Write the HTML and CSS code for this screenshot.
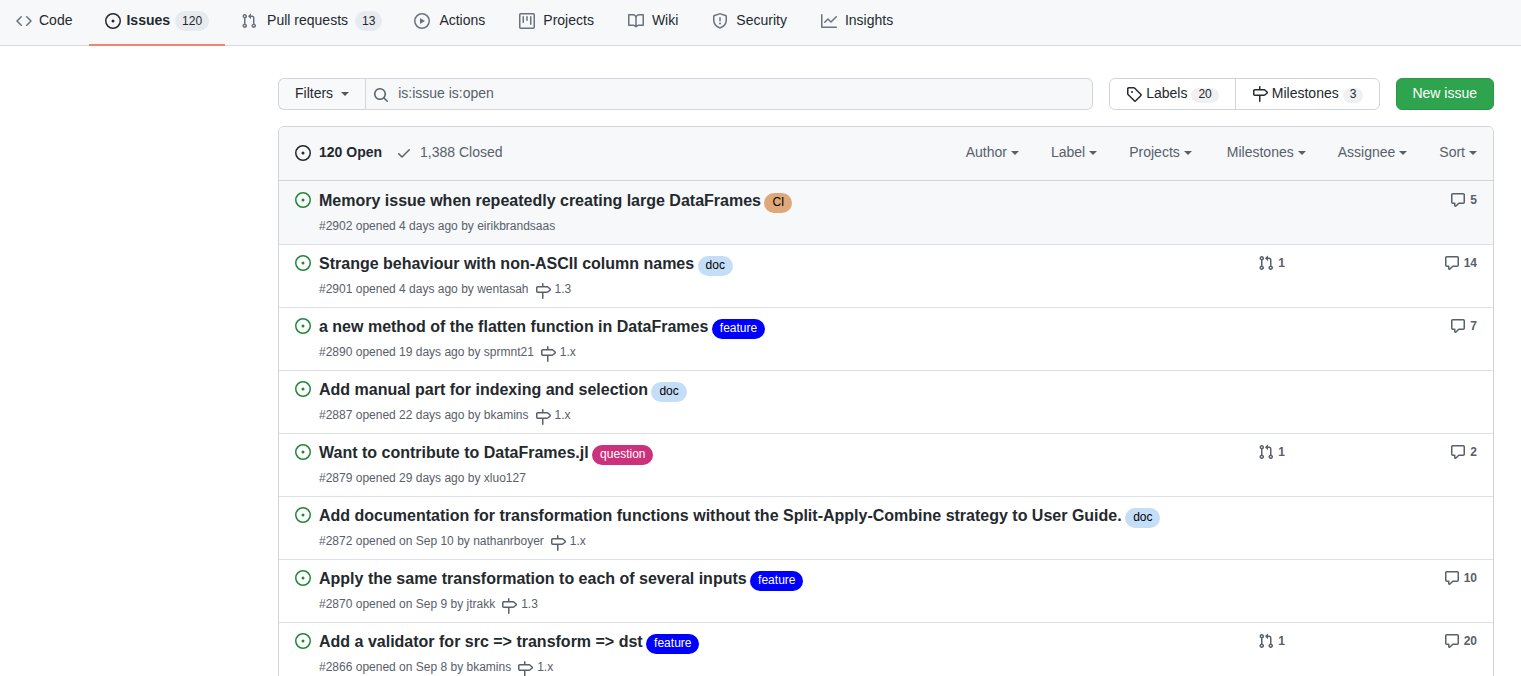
FILE: index.html
```html
<!DOCTYPE html>
<html lang="en">
<head>
<meta charset="utf-8">
<title>Issues</title>
<link rel="stylesheet" href="styles.css">
</head>
<body>
<svg class="sprite" aria-hidden="true">
  <symbol id="code" viewBox="0 0 16 16"><path d="M4.72 3.22a.75.75 0 011.06 1.06L2.06 8l3.72 3.72a.75.75 0 11-1.06 1.06L.47 8.53a.75.75 0 010-1.06l4.25-4.25zm6.56 0a.75.75 0 10-1.06 1.06L13.94 8l-3.72 3.72a.75.75 0 101.06 1.06l4.25-4.25a.75.75 0 000-1.06l-4.25-4.25z"/></symbol>
  <symbol id="issue" viewBox="0 0 16 16"><path d="M8 9.5a1.5 1.5 0 100-3 1.5 1.5 0 000 3z"/><path fill-rule="evenodd" d="M8 0a8 8 0 100 16A8 8 0 008 0zM1.5 8a6.500 6.500 0 1113 0 6.500 6.500 0 01-13 0z"/></symbol>
  <symbol id="pull" viewBox="0 0 16 16"><path fill-rule="evenodd" d="M7.177 3.073L9.573.677A.25.25 0 0110 .854v4.792a.25.25 0 01-.427.177L7.177 3.427a.25.25 0 010-.354zM3.750 2.500a.75.75 0 100 1.500.75.75 0 000-1.500zm-2.250.75a2.250 2.250 0 113 2.122v5.256a2.251 2.251 0 11-1.500 0V5.372A2.250 2.250 0 011.500 3.250zM11 2.500h-1V4h1a1 1 0 011 1v5.628a2.251 2.251 0 101.500 0V5A2.500 2.500 0 0011 2.500zm1 10.250a.75.75 0 111.500 0 .75.75 0 01-1.500 0zM3.750 12a.75.75 0 100 1.500.75.75 0 000-1.500z"/></symbol>
  <symbol id="play" viewBox="0 0 16 16"><path fill-rule="evenodd" d="M1.5 8a6.5 6.5 0 1113 0 6.5 6.5 0 01-13 0zM8 0a8 8 0 100 16A8 8 0 008 0zM6.379 5.227A.25.25 0 006 5.442v5.117a.25.25 0 00.379.214l4.264-2.559a.25.25 0 000-.428L6.379 5.227z"/></symbol>
  <symbol id="project" viewBox="0 0 16 16"><path fill-rule="evenodd" d="M1.750 0A1.750 1.750 0 000 1.750v12.500C0 15.216.784 16 1.750 16h12.500A1.750 1.750 0 0016 14.250V1.750A1.750 1.750 0 0014.250 0H1.750zM1.500 1.750a.25.25 0 01.25-.25h12.500a.25.25 0 01.25.25v12.500a.25.25 0 01-.25.25H1.750a.25.25 0 01-.25-.25V1.750zM11.750 3a.75.75 0 00-.75.75v7.500a.75.75 0 001.500 0v-7.500a.75.75 0 00-.75-.75zm-8.250.75a.75.75 0 011.500 0v5.500a.75.75 0 01-1.500 0v-5.500zM8 3a.75.75 0 00-.75.75v3.500a.75.75 0 001.500 0v-3.500A.75.75 0 008 3z"/></symbol>
  <symbol id="book" viewBox="0 0 16 16"><path fill-rule="evenodd" d="M0 1.750A.75.75 0 01.75 1h4.253c1.227 0 2.317.59 3 1.501A3.744 3.744 0 0111.006 1h4.245a.75.75 0 01.75.75v10.500a.75.75 0 01-.75.75h-4.507a2.250 2.250 0 00-1.591.659l-.622.621a.75.75 0 01-1.060 0l-.622-.621A2.250 2.250 0 005.258 13H.75a.75.75 0 01-.75-.75V1.750zm8.755 3a2.250 2.250 0 012.250-2.250H14.500v9h-3.757c-.71 0-1.400.201-1.992.572l.004-7.322zm-1.504 7.324l.004-5.073-.002-2.253A2.250 2.250 0 005.003 2.500H1.500v9h3.757a3.750 3.750 0 011.994.574z"/></symbol>
  <symbol id="shield" viewBox="0 0 16 16"><path fill-rule="evenodd" d="M7.467.133a1.750 1.750 0 011.066 0l5.250 1.680A1.750 1.750 0 0115 3.480V7c0 1.566-.32 3.182-1.303 4.682-.983 1.498-2.585 2.813-5.032 3.855a1.700 1.700 0 01-1.330 0c-2.447-1.042-4.049-2.357-5.032-3.855C1.320 10.182 1 8.566 1 7V3.480a1.750 1.750 0 011.217-1.667l5.250-1.680zm.61 1.429a.25.25 0 00-.153 0l-5.250 1.680a.25.25 0 00-.174.238V7c0 1.358.275 2.666 1.057 3.860.784 1.194 2.121 2.340 4.366 3.297a.2.2 0 00.154 0c2.245-.956 3.582-2.104 4.366-3.298C13.225 9.666 13.500 8.360 13.500 7V3.480a.25.25 0 00-.174-.237l-5.250-1.680zM8.750 4.750a.75.75 0 00-1.500 0v3a.75.75 0 001.500 0v-3zM9 10.500a1 1 0 11-2 0 1 1 0 012 0z"/></symbol>
  <symbol id="graph" viewBox="0 0 16 16"><path fill-rule="evenodd" d="M1.500 1.750a.75.75 0 00-1.500 0v12.500c0 .414.336.75.75.75h14.500a.75.75 0 000-1.500H1.500V1.750zm14.280 2.530a.75.75 0 00-1.060-1.060L10 7.940 7.530 5.470a.75.75 0 00-1.060 0L3.220 8.720a.75.75 0 001.060 1.060L7 7.060l2.470 2.470a.75.75 0 001.060 0l5.250-5.250z"/></symbol>
  <symbol id="search" viewBox="0 0 16 16"><path fill-rule="evenodd" d="M11.500 7a4.499 4.499 0 11-8.998 0A4.499 4.499 0 0111.500 7zm-.82 4.740a6 6 0 111.060-1.060l3.040 3.040a.75.75 0 11-1.060 1.060l-3.040-3.040z"/></symbol>
  <symbol id="tag" viewBox="0 0 16 16"><path fill-rule="evenodd" d="M2.500 7.775V2.750a.25.25 0 01.25-.25h5.025a.25.25 0 01.177.073l6.250 6.250a.25.25 0 010 .354l-5.025 5.025a.25.25 0 01-.354 0l-6.250-6.250a.25.25 0 01-.073-.177zm-1.500 0V2.750C1 1.784 1.784 1 2.750 1h5.025c.464 0 .91.184 1.238.513l6.250 6.250a1.750 1.750 0 010 2.474l-5.026 5.026a1.750 1.750 0 01-2.474 0l-6.250-6.250A1.750 1.750 0 011 7.775zM6 5a1 1 0 100 2 1 1 0 000-2z"/></symbol>
  <symbol id="milestone" viewBox="0 0 16 16"><path fill-rule="evenodd" d="M7.750 0a.75.75 0 01.75.75V3h3.634c.414 0 .814.147 1.130.414l2.070 1.750a1.750 1.750 0 010 2.672l-2.070 1.750a1.750 1.750 0 01-1.130.414H8.500v5.250a.75.75 0 11-1.500 0V10H2.750A1.750 1.750 0 011 8.250v-3.500C1 3.784 1.784 3 2.750 3H7V.75A.75.75 0 017.750 0zm0 8.500h4.384a.25.25 0 00.161-.06l2.070-1.750a.25.25 0 000-.38l-2.070-1.750a.25.25 0 00-.161-.06H2.750a.25.25 0 00-.25.25v3.500c0 .138.112.25.25.25h5z"/></symbol>
  <symbol id="check" viewBox="0 0 16 16"><path fill-rule="evenodd" d="M13.780 4.220a.75.75 0 010 1.060l-7.250 7.250a.75.75 0 01-1.060 0L2.220 9.280a.75.75 0 011.060-1.060L6 10.940l6.720-6.720a.75.75 0 011.060 0z"/></symbol>
  <symbol id="comment" viewBox="0 0 16 16"><path fill-rule="evenodd" d="M2.750 2.500a.25.25 0 00-.25.25v7.500c0 .138.112.25.25.25h2a.75.75 0 01.75.75v2.190l2.720-2.720a.75.75 0 01.53-.22h4.500a.25.25 0 00.25-.25v-7.500a.25.25 0 00-.25-.25H2.750zM1 2.750C1 1.784 1.784 1 2.750 1h10.500c.966 0 1.750.784 1.750 1.750v7.500A1.750 1.750 0 0113.250 12H9.060l-2.573 2.573A1.457 1.457 0 014 13.543V12H2.750A1.750 1.750 0 011 10.250v-7.500z"/></symbol>
</svg>

<nav class="tabs" aria-label="Repository">
  <a class="tab code" href="#code"><svg class="icon"><use href="#code"/></svg>Code</a>
  <a class="tab selected" href="#issues" aria-current="page"><svg class="icon"><use href="#issue"/></svg>Issues<span class="counter">120</span></a>
  <a class="tab pulls" href="#pulls"><svg class="icon"><use href="#pull"/></svg>Pull requests<span class="counter">13</span></a>
  <a class="tab actions" href="#actions"><svg class="icon"><use href="#play"/></svg>Actions</a>
  <a class="tab" href="#projects"><svg class="icon"><use href="#project"/></svg>Projects</a>
  <a class="tab" href="#wiki"><svg class="icon"><use href="#book"/></svg>Wiki</a>
  <a class="tab" href="#security"><svg class="icon"><use href="#shield"/></svg>Security</a>
  <a class="tab" href="#insights"><svg class="icon"><use href="#graph"/></svg>Insights</a>
</nav>

<main class="content">
  <div class="toolbar">
    <form class="search" role="search">
      <button class="filters" type="button">Filters<span class="caret"></span></button>
      <label class="field">
        <svg class="icon" role="img" aria-label="Search all issues"><use href="#search"/></svg>
        <input type="text" value="is:issue is:open">
      </label>
    </form>
    <div class="subnav">
      <a href="#labels"><svg class="icon"><use href="#tag"/></svg>Labels<span class="count">20</span></a>
      <a href="#milestones"><svg class="icon"><use href="#milestone"/></svg>Milestones<span class="count">3</span></a>
    </div>
    <button class="primary" type="button">New issue</button>
  </div>

  <section class="box">
    <header class="box-header">
      <div class="states">
        <a class="open" href="#open"><svg class="icon"><use href="#issue"/></svg>120 Open</a>
        <a href="#closed"><svg class="icon"><use href="#check"/></svg>1,388 Closed</a>
      </div>
      <div class="menus">
        <button type="button">Author<span class="caret"></span></button>
        <button type="button">Label<span class="caret"></span></button>
        <button type="button">Projects<span class="caret"></span></button>
        <button type="button" class="apart">Milestones<span class="caret"></span></button>
        <button type="button">Assignee<span class="caret"></span></button>
        <button type="button">Sort<span class="caret"></span></button>
      </div>
    </header>
    <ul class="issues">
      <li class="issue focused">
        <svg class="icon status"><use href="#issue"/></svg>
        <div class="summary"><h3><a href="#2902">Memory issue when repeatedly creating large DataFrames</a> <a class="label ci" href="#ci">CI</a></h3>
          <p>#2902 opened 4 days ago by <a href="#u">eirikbrandsaas</a></p></div>
        <div class="stat"></div>
        <div class="stat"></div>
        <div class="stat"><a href="#2902"><svg class="icon"><use href="#comment"/></svg>5</a></div>
      </li>
      <li class="issue">
        <svg class="icon status"><use href="#issue"/></svg>
        <div class="summary"><h3><a href="#2901">Strange behaviour with non-ASCII column names</a> <a class="label doc" href="#doc">doc</a></h3>
          <p>#2901 opened 4 days ago by <a href="#u">wentasah</a><a class="milestone" href="#m"><svg class="icon"><use href="#milestone"/></svg>1.3</a></p></div>
        <div class="stat"><a href="#2901"><svg class="icon"><use href="#pull"/></svg>1</a></div>
        <div class="stat"></div>
        <div class="stat"><a href="#2901"><svg class="icon"><use href="#comment"/></svg>14</a></div>
      </li>
      <li class="issue">
        <svg class="icon status"><use href="#issue"/></svg>
        <div class="summary"><h3><a href="#2890">a new method of the flatten function in DataFrames</a> <a class="label feature" href="#feature">feature</a></h3>
          <p>#2890 opened 19 days ago by <a href="#u">sprmnt21</a><a class="milestone" href="#m"><svg class="icon"><use href="#milestone"/></svg>1.x</a></p></div>
        <div class="stat"></div>
        <div class="stat"></div>
        <div class="stat"><a href="#2890"><svg class="icon"><use href="#comment"/></svg>7</a></div>
      </li>
      <li class="issue">
        <svg class="icon status"><use href="#issue"/></svg>
        <div class="summary"><h3><a href="#2887">Add manual part for indexing and selection</a> <a class="label doc" href="#doc">doc</a></h3>
          <p>#2887 opened 22 days ago by <a href="#u">bkamins</a><a class="milestone" href="#m"><svg class="icon"><use href="#milestone"/></svg>1.x</a></p></div>
        <div class="stat"></div>
        <div class="stat"></div>
        <div class="stat"></div>
      </li>
      <li class="issue">
        <svg class="icon status"><use href="#issue"/></svg>
        <div class="summary"><h3><a href="#2879">Want to contribute to DataFrames.jl</a> <a class="label question" href="#question">question</a></h3>
          <p>#2879 opened 29 days ago by <a href="#u">xluo127</a></p></div>
        <div class="stat"><a href="#2879"><svg class="icon"><use href="#pull"/></svg>1</a></div>
        <div class="stat"></div>
        <div class="stat"><a href="#2879"><svg class="icon"><use href="#comment"/></svg>2</a></div>
      </li>
      <li class="issue">
        <svg class="icon status"><use href="#issue"/></svg>
        <div class="summary"><h3><a href="#2872">Add documentation for transformation functions without the Split-Apply-Combine strategy to User Guide.</a> <a class="label doc" href="#doc">doc</a></h3>
          <p>#2872 opened on Sep 10 by <a href="#u">nathanrboyer</a><a class="milestone" href="#m"><svg class="icon"><use href="#milestone"/></svg>1.x</a></p></div>
        <div class="stat"></div>
        <div class="stat"></div>
        <div class="stat"></div>
      </li>
      <li class="issue">
        <svg class="icon status"><use href="#issue"/></svg>
        <div class="summary"><h3><a href="#2870">Apply the same transformation to each of several inputs</a> <a class="label feature" href="#feature">feature</a></h3>
          <p>#2870 opened on Sep 9 by <a href="#u">jtrakk</a><a class="milestone" href="#m"><svg class="icon"><use href="#milestone"/></svg>1.3</a></p></div>
        <div class="stat"></div>
        <div class="stat"></div>
        <div class="stat"><a href="#2870"><svg class="icon"><use href="#comment"/></svg>10</a></div>
      </li>
      <li class="issue">
        <svg class="icon status"><use href="#issue"/></svg>
        <div class="summary"><h3><a href="#2866">Add a validator for src =&gt; transform =&gt; dst</a> <a class="label feature" href="#feature">feature</a></h3>
          <p>#2866 opened on Sep 8 by <a href="#u">bkamins</a><a class="milestone" href="#m"><svg class="icon"><use href="#milestone"/></svg>1.x</a></p></div>
        <div class="stat"><a href="#2866"><svg class="icon"><use href="#pull"/></svg>1</a></div>
        <div class="stat"></div>
        <div class="stat"><a href="#2866"><svg class="icon"><use href="#comment"/></svg>20</a></div>
      </li>
    </ul>
  </section>
</main>
</body>
</html>
```
FILE: styles.css
```css
* { box-sizing: border-box; }

html { scrollbar-width: none; }

body {
  margin: 0;
  background: #fff;
  color: #24292e;
  font: 14px/20px "Liberation Sans", Arial, sans-serif;
}

a { color: inherit; text-decoration: none; }
button, input { font: inherit; color: inherit; margin: 0; }
button { cursor: pointer; }
h3, p, ul { margin: 0; padding: 0; }
ul { list-style: none; }

.sprite { display: none; }
.icon { width: 16px; height: 16px; flex: none; fill: currentColor; }

.caret {
  margin-top: 2px;
  border: 4px solid transparent;
  border-top-color: currentColor;
  border-bottom: 0;
}

/* Repository tabs */
.tabs {
  display: flex;
  height: 46px;
  background: #f6f8fa;
  border-bottom: 1px solid #d5dae0;
}
.tab {
  display: flex;
  align-items: flex-start;
  gap: 8px;
  padding: 10px 18px 0 16px;
  white-space: nowrap;
}
.tab .icon { margin-top: 3px; color: #6a737d; }
.tab.code { gap: 7px; padding-right: 17px; }
.tab.pulls { gap: 10px; padding-right: 16px; }
.tab.pulls .counter { margin-left: -3px; }
.tab.actions { gap: 9px; }
.tab.selected {
  gap: 5px;
  padding-right: 16px;
  margin-bottom: -1px;
  border-bottom: 2px solid #f9826c;
  font-weight: 700;
}
.tab.selected .icon { color: #24292e; }
.counter {
  padding: 0 7px;
  margin-top: 1px;
  border-radius: 20px;
  background: #e7eaee;
  font-size: 12px;
  line-height: 20px;
  font-weight: 400;
}

/* Toolbar */
.content { padding: 32px 27px 0 278px; }
.toolbar { display: flex; gap: 16px; margin-bottom: 16px; }
.search { display: flex; flex: 1; min-width: 0; }
.filters {
  display: flex;
  align-items: center;
  gap: 8px;
  padding: 0 16px 2px;
  border: 1px solid #d1d5da;
  border-right: 0;
  border-radius: 6px 0 0 6px;
  background: #f8f9fb;
}
.filters .caret { border-top-color: #51575c; }
.field {
  display: flex;
  flex: 1;
  align-items: center;
  gap: 9px;
  padding-left: 7px;
  border: 1px solid #d1d5da;
  border-radius: 0 6px 6px 0;
  background: #f6f8fa;
  color: #586069;
}
.field .icon { margin-top: 2px; }
.field input {
  flex: 1;
  min-width: 0;
  height: 30px;
  padding: 0 8px 2px 0;
  border: 0;
  outline: 0;
  background: transparent;
}
.subnav {
  display: flex;
  border: 1px solid #d1d5da;
  border-radius: 6px;
}
.subnav a {
  display: flex;
  gap: 4px;
  padding: 4px 16px 0;
}
.subnav a + a { border-left: 1px solid #d1d5da; }
.subnav .icon { margin-top: 3px; }
.count {
  height: 15px;
  padding: 0 7px;
  margin-top: 5px;
  border-radius: 20px;
  background: #eff0f2;
  font-size: 12px;
  line-height: 13px;
}
.primary {
  padding: 0 16px 2px 15px;
  border: 1px solid #2c974b;
  border-radius: 6px;
  background: #2ea44f;
  color: #fff;
}

/* Issue list */
.box {
  border: 1px solid #d1d5da;
  border-radius: 6px;
  overflow: hidden;
}
.box-header {
  display: flex;
  justify-content: space-between;
  padding: 15px 16px 18px;
  background: #f6f8fa;
  border-bottom: 1px solid #d1d5da;
  color: #586069;
}
.states, .menus { display: flex; }
.states { gap: 14px; }
.states a { display: flex; gap: 8px; }
.states .icon { margin-top: 3px; }
.states .open { color: #24292e; font-weight: 700; }
.menus { gap: 32px; }
.menus button {
  display: flex;
  align-items: center;
  gap: 4px;
  padding: 0;
  border: 0;
  background: none;
}
.menus .apart { margin-left: 3px; }

.issue {
  display: flex;
  padding: 7px 16px 9px;
  border-top: 1px solid #dde1e6;
}
.issue:first-child { border-top-color: transparent; }
.issue.focused { background: #f6f8fa; }
.status { margin: 3px 8px 0 0; color: #22863a; }
.summary { flex: 1; min-width: 0; }
.summary h3 { font-size: 16px; line-height: 24px; }
.summary p {
  display: flex;
  margin-top: 4px;
  color: #586069;
  font-size: 12px;
  line-height: 18px;
  white-space: pre;
}
.label {
  display: inline-block;
  margin: 0 0 -4px -1px;
  padding: 0 8px 2px;
  border-radius: 20px;
  font-size: 12px;
  line-height: 18px;
  font-weight: 400;
}
.ci { background: #dfa878; color: #000; }
.doc { background: #c5def8; color: #000; }
.feature { background: #0000ff; color: #fff; }
.question { background: #cc317c; color: #fff; }
.milestone { display: flex; gap: 4px; margin-left: 6px; }
.milestone .icon { margin: 3px 0 -3px; }

.stat {
  flex: 0 0 96px;
  color: #586069;
  font-size: 12px;
  font-weight: 700;
}
.stat a {
  display: flex;
  justify-content: flex-end;
  gap: 4px;
  padding-top: 1px;
}
.stat .icon { margin-top: 2px; }
```
